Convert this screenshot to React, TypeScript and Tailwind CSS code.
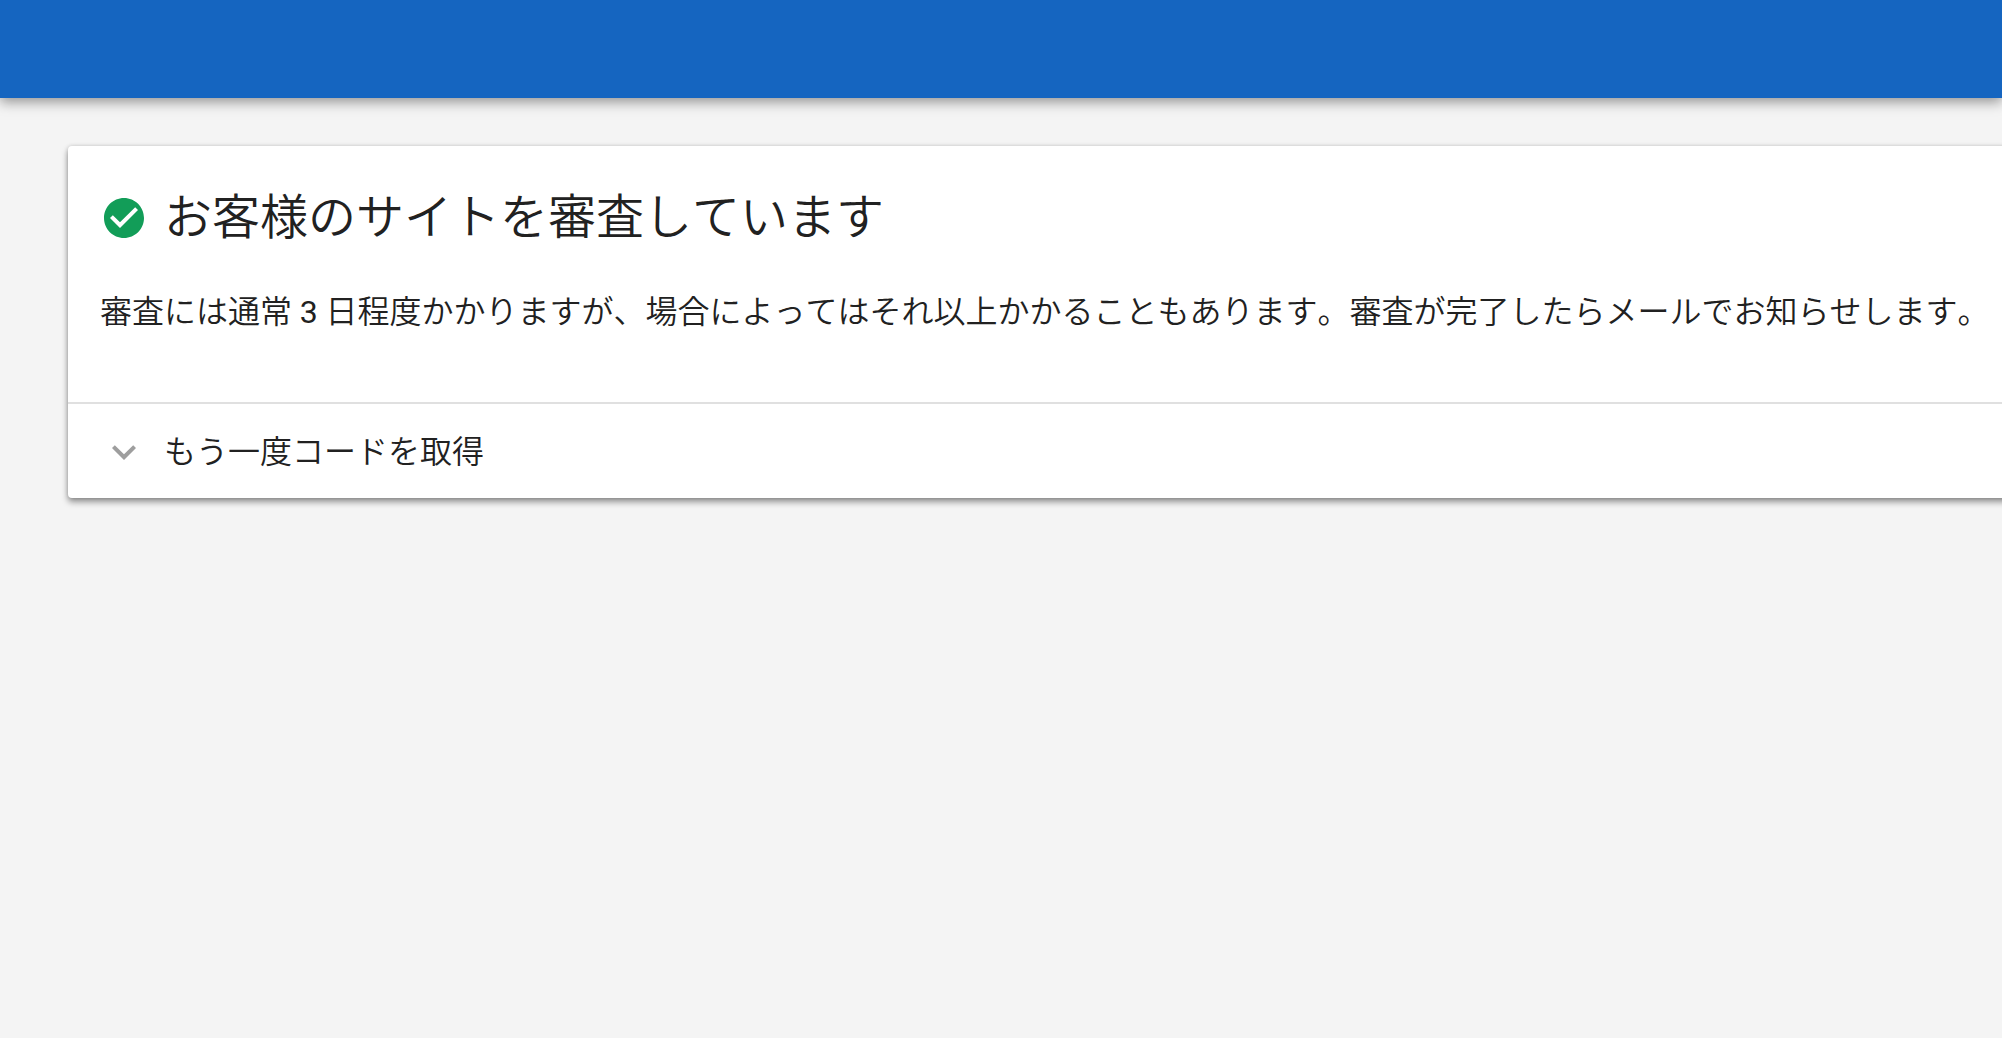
import React, { useState } from 'react';

const CheckCircleIcon = () => (
  <svg viewBox="0 0 24 24" className="h-12 w-12 shrink-0 fill-[#129d58]" aria-hidden="true">
    <path d="M12 2C6.48 2 2 6.48 2 12s4.48 10 10 10 10-4.48 10-10S17.52 2 12 2zm-2 15l-5-5 1.41-1.41L10 14.17l7.59-7.59L19 8l-9 9z" />
  </svg>
);

const ExpandMoreIcon = () => (
  <svg viewBox="0 0 24 24" className="h-12 w-12 shrink-0 fill-[#9e9e9e]" aria-hidden="true">
    <path d="M16.59 8.59L12 13.17 7.41 8.59 6 10l6 6 6-6z" />
  </svg>
);

export default function App() {
  const [expanded, setExpanded] = useState(false);

  return (
    <div className="min-h-screen overflow-x-hidden bg-[#f4f4f4] font-['Roboto','Noto_Sans_CJK_JP',sans-serif] font-[350] text-[#212121] [font-kerning:none]">
      <header className="h-[98px] bg-[#1565c0] shadow-[0_4px_12px_rgba(0,0,0,0.4)]" />

      <main className="-mr-8 pt-12 pl-[68px]">
        <section className="rounded bg-white shadow-[0_4px_6px_rgba(0,0,0,0.4),0_0_4px_rgba(0,0,0,0.15)]">
          <div className="px-8 pt-12 pb-16">
            <div className="flex items-center gap-4">
              <CheckCircleIcon />
              <h1 className="text-5xl leading-[46px] font-[350]">お客様のサイトを審査しています</h1>
            </div>
            <p className="mt-[46px] mb-0.5 text-[32px] leading-12">
              審査には通常 <span className="font-normal">3</span> 日程度かかりますが、場合によってはそれ以上かかることもあります。審査が完了したらメールでお知らせします。
            </p>
          </div>

          <button
            type="button"
            aria-expanded={expanded}
            onClick={() => setExpanded(!expanded)}
            className="flex w-full items-center gap-4 border-t-2 border-[#e0e0e0] px-8 pt-6 pb-[22px] text-left text-[32px] leading-12"
          >
            <ExpandMoreIcon />
            <span>もう一度コードを取得</span>
          </button>
        </section>
      </main>
    </div>
  );
}
